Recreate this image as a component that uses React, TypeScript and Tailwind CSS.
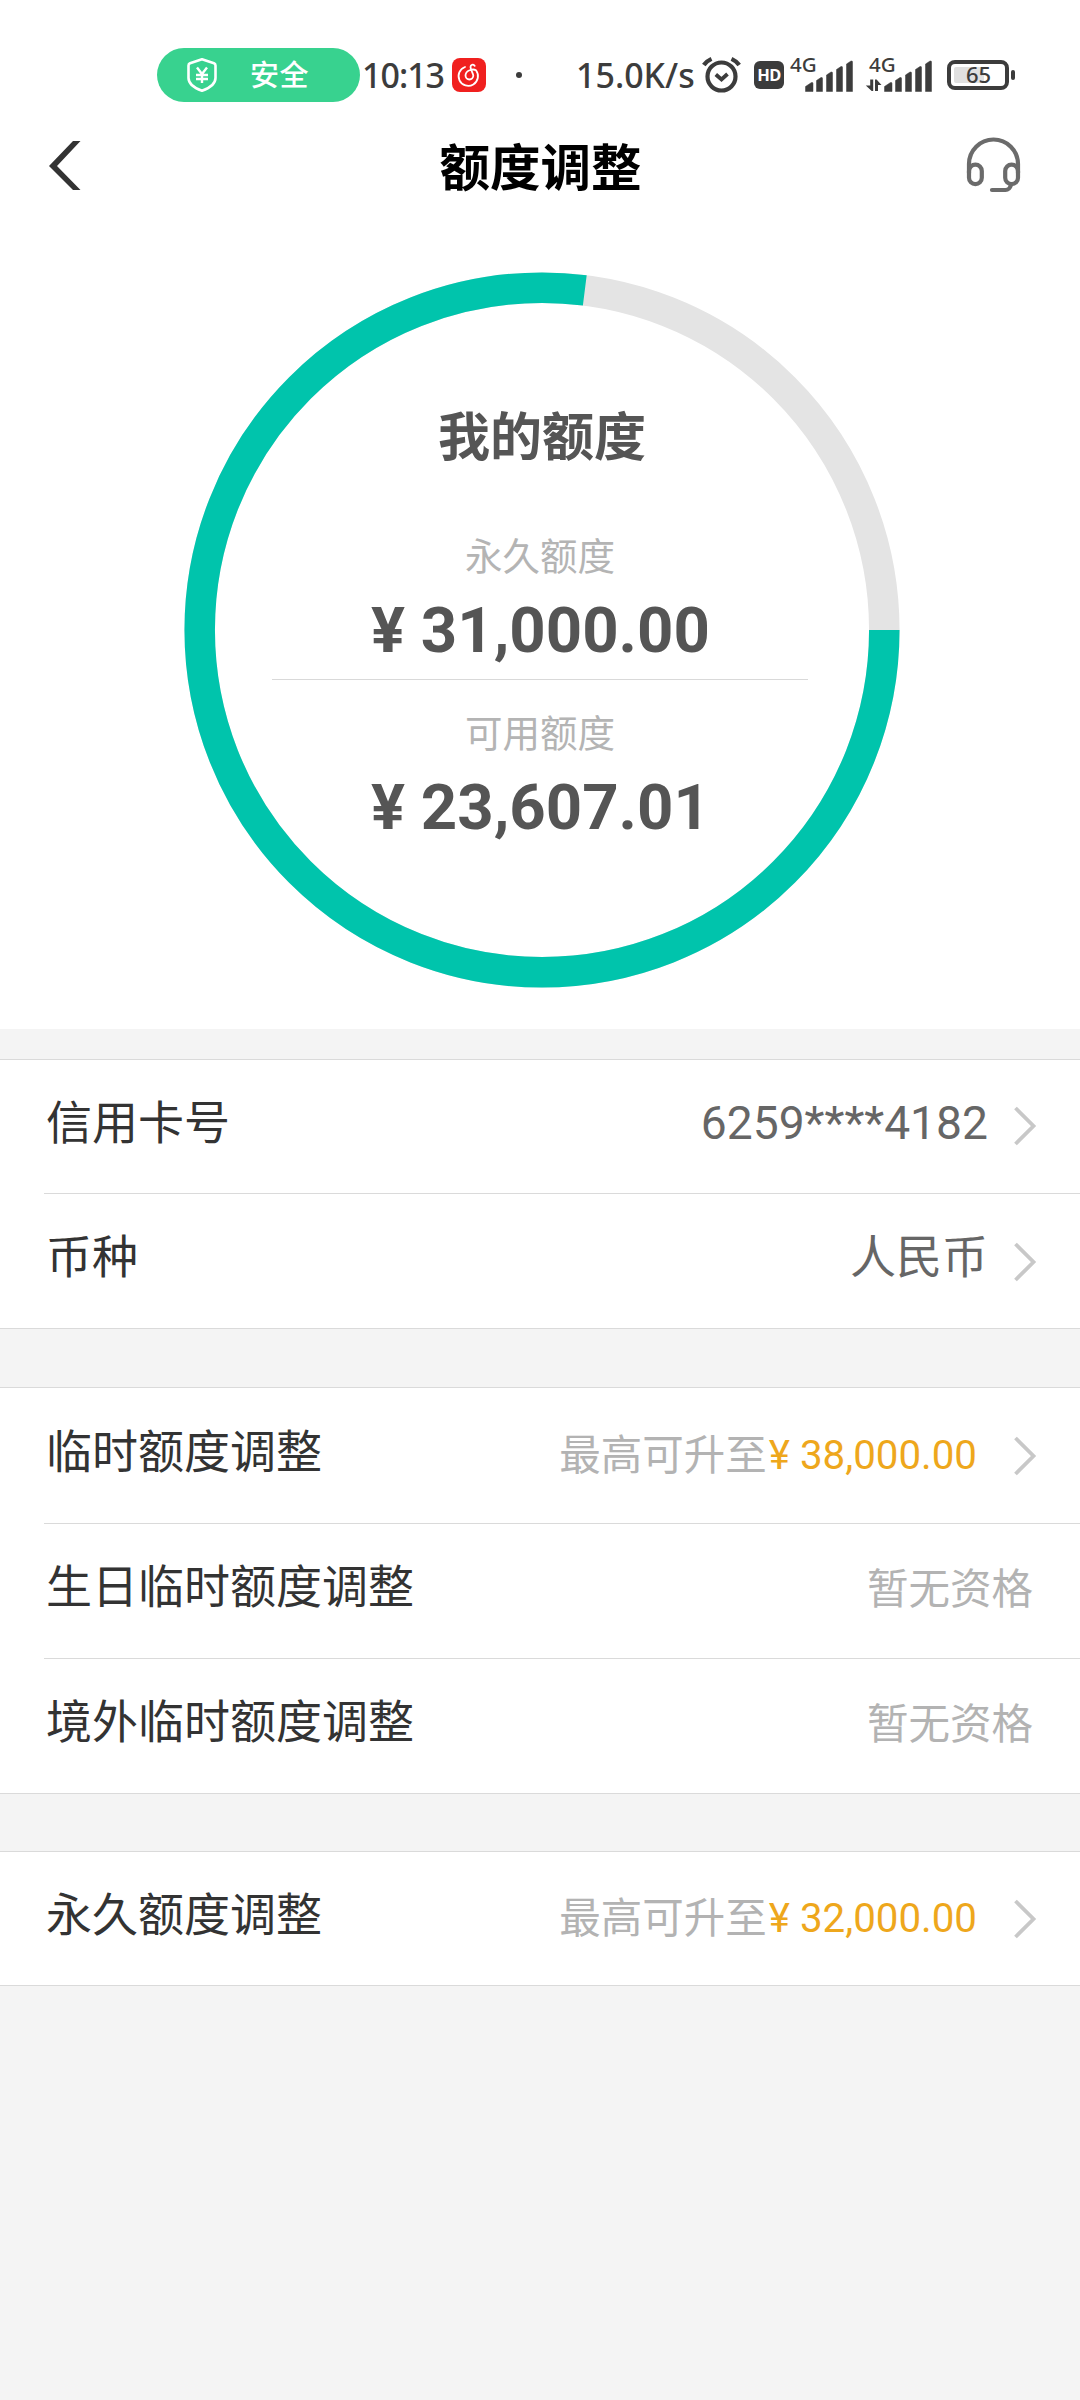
import React from "react";

const CJK = "font-['Noto_Sans_CJK_SC',sans-serif]";
const STATUS = "font-['Noto_Sans',sans-serif]";

function ShieldIcon() {
  return (
    <svg width="32" height="36" viewBox="0 0 32 36" fill="none">
      <path
        d="M16 2.2 L28 6.2 Q29.5 6.8 29.5 8.4 V21 C29.5 27.5 22 31.6 16 33.8 C10 31.6 2.500 27.500 2.500 21 V8.400 Q2.500 6.800 4 6.200 Z"
        stroke="#fff"
        strokeWidth="2.600"
        strokeLinejoin="round"
      />
      <path d="M11 10.500 L16 17 L21 10.500 M16 17 V26 M10 18 H22 M10 22 H22" stroke="#fff" strokeWidth="2.400" />
    </svg>
  );
}

function MusicIcon() {
  return (
    <svg width="34" height="34" viewBox="0 0 34 34" fill="none">
      <rect width="34" height="34" rx="8" fill="#f0201f" />
      <path
        d="M13 9 A9.700 9.700 0 1 0 24 12.300 C21 10.400 13.500 12.300 13.500 17.600 A3.900 3.900 0 0 0 21.300 17.600 C21.300 16 18.500 11.500 18.500 9 C18.500 6.500 21 6 22.700 7.800"
        stroke="#fff"
        strokeWidth="1.800"
        strokeLinecap="round"
      />
    </svg>
  );
}

function AlarmIcon() {
  return (
    <svg className="shrink-0" width="40" height="38" viewBox="0 0 40 38" fill="none" stroke="#3c3c3c">
      <circle cx="19.500" cy="20.500" r="14" strokeWidth="4.200" />
      <path d="M13.800 18.500 L19.500 23.500 L25.500 18" strokeWidth="3.800" />
      <path d="M1.800 9 Q4.500 5 9.500 2.800 M29.500 2.800 Q34.500 5 37.200 9" strokeWidth="4.200" />
    </svg>
  );
}

const BARS = [
  "M0 31 V26 L6 22 Q7.500 21.500 7.500 23 V31 Z",
  "M11 31 V20 L15.500 17 Q17 16.500 17 18 V31 Z",
  "M21 31 V14.500 L25.500 11.500 Q27 11 27 12.500 V31 Z",
  "M31 31 V9 L35.500 6 Q37 5.500 37 7 V31 Z",
  "M41 31 V3.500 L45.500 .5 Q47 0 47 1.500 V31 Z",
];

function SignalIcon({ data }: { data?: boolean }) {
  return (
    <svg width="67" height="50" viewBox="0 -6 67 50" fill="#3c3c3c">
      <text x="4" y="15.500" fontSize="20.500" fontFamily="Noto Sans, sans-serif" fontWeight="500">
        4G
      </text>
      {data && (
        <path d="M5.200 23.500 h3 v11.500 h-1.500 L.8 29.500 h4.400 Z M10 35 V23.500 h1.600 L16.500 29 h-3.500 V35 Z" />
      )}
      <g transform="translate(19.500 4.500)" stroke="#3c3c3c" strokeWidth=".5">
        {BARS.map((d) => (
          <path key={d} d={d} />
        ))}
      </g>
    </svg>
  );
}

function BatteryIcon() {
  return (
    <svg width="69" height="30" viewBox="0 0 69 30">
      <rect x="7" y="7" width="30" height="16" rx="2" fill="#e0e0e0" />
      <rect x="2" y="2" width="58" height="26" rx="6" fill="none" stroke="#3c3c3c" strokeWidth="4" />
      <rect x="64" y="10" width="4" height="10" rx="2" fill="#3c3c3c" />
      <text x="31.500" y="23" textAnchor="middle" fontSize="22" fontFamily="Noto Sans, sans-serif" fontWeight="500" fill="#3c3c3c">
        65
      </text>
    </svg>
  );
}

function StatusBar() {
  return (
    <div className={`flex h-[120px] items-center pt-[30px] pl-[157px] text-[#3c3c3c] ${STATUS}`}>
      <div className="flex h-[54px] w-[203px] shrink-0 items-center rounded-full bg-[#38d28f] pl-[29px]">
        <ShieldIcon />
        <span className={`ml-[32px] pb-[3px] text-[29px] leading-none font-medium tracking-[0.5px] text-white ${CJK}`}>安全</span>
      </div>
      <span className="ml-[2px] w-[90px] shrink-0 text-[34px] leading-none font-medium tracking-[-1px] whitespace-nowrap">10:13</span>
      <MusicIcon />
      <i className="mr-[54px] ml-[30px] size-1.5 shrink-0 rounded-full bg-[#3c3c3c]" />
      <span className="w-[126px] shrink-0 text-[34px] leading-none font-medium whitespace-nowrap">15.0K/s</span>
      <AlarmIcon />
      <span className="ml-[12px] flex h-7 w-[30px] shrink-0 items-center justify-center rounded-md bg-[#3c3c3c] text-[16.5px] leading-none font-bold tracking-[-0.5px] text-white">
        HD
      </span>
      <div className="ml-[2px] flex shrink-0 gap-[12px]">
        <SignalIcon />
        <SignalIcon data />
      </div>
      <div className="ml-[15px] shrink-0">
        <BatteryIcon />
      </div>
    </div>
  );
}

function Header() {
  return (
    <header className="flex h-[92px] items-center justify-between pr-[58px] pl-[48px]">
      <svg width="54" height="50" viewBox="0 0 54 50" fill="#333">
        <path d="M25 0 H32.500 L9 25 L32.500 49 H25 L1 25 Z" />
      </svg>
      <h1 className={`ml-[13px] pb-[3px] text-[50.500px] leading-none font-bold text-black ${CJK}`}>额度调整</h1>
      <svg width="56" height="58" viewBox="0 0 56 58" fill="none" stroke="#6b6b6b" strokeWidth="4.200" strokeLinecap="round">
        <path d="M3 36 V27 A24.500 24.500 0 0 1 52 27 V36" />
        <rect x="3" y="27.700" width="12.800" height="19.500" rx="6.400" />
        <rect x="39.200" y="27.700" width="12.800" height="19.500" rx="6.400" />
        <path d="M26 53 H39.500 Q43.500 53 45 48" />
      </svg>
    </header>
  );
}

function QuotaRing() {
  return (
    <section className="flex h-[817px] justify-center pt-[60px] pl-[4px]">
      <div className="relative size-[716px]">
        <svg className="absolute inset-0" width="716" height="716" viewBox="0 0 716 716" fill="none" strokeWidth="30.500">
          <circle cx="358" cy="358" r="342.300" stroke="#e4e4e4" />
          <circle cx="358" cy="358" r="342.300" stroke="#00c4ac" pathLength="360" strokeDasharray="277.200 82.800" />
        </svg>
        <div className="relative flex flex-col items-center pr-[4px] text-[#555]">
          <h2 className={`mt-[136px] ml-[4px] text-[52px] leading-[52px] font-bold ${CJK}`}>我的额度</h2>
          <p className={`mt-[75px] text-[37.500px] leading-[38px] text-[#b4b4b4] ${CJK}`}>永久额度</p>
          <p className="mt-[26px] w-[338px] font-['Roboto',sans-serif] text-[63.5px] leading-[64px] font-bold whitespace-nowrap">
            ¥ 31,000.00
          </p>
          <div className="mt-[16px] h-px w-[536px] bg-[#d9d9d9]" />
          <p className={`mt-[32px] text-[37.500px] leading-[38px] text-[#b4b4b4] ${CJK}`}>可用额度</p>
          <p className="mt-[26px] w-[338px] font-['Roboto',sans-serif] text-[63.5px] leading-[64px] font-bold whitespace-nowrap">
            ¥ 23,607.01
          </p>
        </div>
      </div>
    </section>
  );
}

function Arrow() {
  return (
    <svg className="shrink-0" width="24" height="40" viewBox="0 0 24 40" fill="none" stroke="#c8c8c8" strokeWidth="3.800">
      <path d="M2.500 2 L20.500 20 L2.500 38" />
    </svg>
  );
}

function Row({ label, height, children }: { label: string; height: string; children: React.ReactNode }) {
  return (
    <div className={`ml-[44px] flex items-center justify-between border-b border-[#dadada] pl-[2px] last:ml-0 last:pl-[46px] ${height}`}>
      <span className={`pb-[16px] text-[46px] leading-none text-[#333] ${CJK}`}>{label}</span>
      {children}
    </div>
  );
}

function Raise({ amount }: { amount: string }) {
  return (
    <div className="flex items-center pr-[43px]">
      <span className={`pb-[6px] text-[41.500px] leading-none text-[#b3b3b3] ${CJK}`}>最高可升至</span>
      <span className="mr-[36px] ml-[2px] pt-[2px] font-['Roboto',sans-serif] text-[40.300px] leading-none whitespace-nowrap text-[#eea71c]">
        ¥ {amount}
      </span>
      <Arrow />
    </div>
  );
}

function NotEligible() {
  return <span className={`pr-[47px] pb-[8px] text-[41.500px] leading-none text-[#b3b3b3] ${CJK}`}>暂无资格</span>;
}

export default function App() {
  return (
    <main className="flex h-[2400px] w-[1080px] flex-col overflow-hidden bg-[#f4f4f4]">
      <div className="bg-white">
        <StatusBar />
        <Header />
        <QuotaRing />
      </div>
      <section className="mt-[30px] border-t border-[#dadada] bg-white">
        <Row label="信用卡号" height="h-[134px]">
          <div className="flex items-center pr-[43px]">
            <span className="mr-[25px] pb-[7px] font-['Roboto',sans-serif] text-[46.2px] leading-none text-[#666]">6259****4182</span>
            <Arrow />
          </div>
        </Row>
        <Row label="币种" height="h-[135px]">
          <div className="flex items-center pt-[2px] pr-[43px]">
            <span className={`mr-[25px] pb-[18px] text-[46px] leading-none text-[#666] ${CJK}`}>人民币</span>
            <Arrow />
          </div>
        </Row>
      </section>
      <section className="mt-[58px] border-t border-[#dadada] bg-white">
        <Row label="临时额度调整" height="h-[136px]">
          <Raise amount="38,000.00" />
        </Row>
        <Row label="生日临时额度调整" height="h-[135px]">
          <NotEligible />
        </Row>
        <Row label="境外临时额度调整" height="h-[135px]">
          <NotEligible />
        </Row>
      </section>
      <section className="mt-[57px] border-t border-[#dadada] bg-white">
        <Row label="永久额度调整" height="h-[134px]">
          <Raise amount="32,000.00" />
        </Row>
      </section>
    </main>
  );
}
